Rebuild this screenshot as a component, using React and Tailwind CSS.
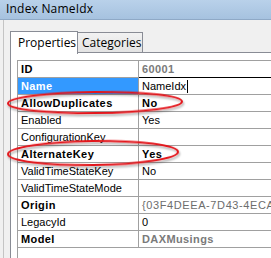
import React from 'react'

// Property rows shown in the grid
const rows = [
    { name: 'ID', value: '60001', nameClass: 'font-bold tracking-[0.4px] text-[#7a7a7a]', valueClass: 'font-bold tracking-[0.4px] text-[#7a7a7a]' },
    { name: 'Name', value: 'NameIdx', selected: true },
    { name: 'AllowDuplicates', value: 'No', nameClass: 'font-bold tracking-[0.45px]', valueClass: 'font-bold tracking-[0.45px]' },
    { name: 'Enabled', value: 'Yes' },
    { name: 'ConfigurationKey', value: '' },
    { name: 'AlternateKey', value: 'Yes', nameClass: 'font-bold tracking-[0.45px]', valueClass: 'font-bold tracking-[0.45px]' },
    { name: 'ValidTimeStateKey', value: 'No' },
    { name: 'ValidTimeStateMode', value: '', nameClass: 'text-[#7a7a7a]' },
    { name: 'Origin', value: '{03F4DEEA-7D43-4ECA-9B71}', nameClass: 'font-bold tracking-[0.4px] text-[#7a7a7a]', valueClass: 'tracking-[0.6px] text-[#6d6d6d]' },
    { name: 'LegacyId', value: '0' },
    { name: 'Model', value: 'DAXMusings', nameClass: 'font-bold tracking-[0.4px] text-[#7a7a7a]', valueClass: 'font-bold tracking-[0.4px] text-[#7a7a7a]' },
];

const PropertyRow = ({ row, index }) => (
    <div className="flex h-[17px]">
        <div
            className={`w-[121px] shrink-0 pl-[3px] border-r border-b border-[#a0a0a0] leading-[16px] whitespace-nowrap overflow-hidden ${
                row.selected ? 'bg-[#3399ff] text-white font-bold tracking-[0.4px]' : 'text-black'
            } ${row.nameClass || ''}`}
        >
            {row.name}
        </div>
        <div
            className={`flex-1 min-w-0 pl-[3px] border-b leading-[16px] whitespace-nowrap overflow-hidden flex items-center ${
                index === 0 ? 'border-black' : 'border-[#a0a0a0]'
            } ${row.valueClass || 'text-black'}`}
        >
            <span>{row.value}</span>
            {row.selected && <span className="ml-[1px] w-px h-[13px] bg-black" />}
        </div>
    </div>
);

export default function App() {
    return (
        <div className="relative w-[271px] h-[258px] overflow-hidden bg-[#f0f0f0] flex flex-col">
            {/* Title bar */}
            <div
                className="h-[20px] shrink-0 bg-gradient-to-b from-[#b9d1ea] to-[#a6c2df] border-b border-[#8fa9c6] pl-[6px] text-[12px] leading-[18px] tracking-[0.2px] text-black"
                style={{ fontFamily: '"Open Sans", sans-serif' }}
            >
                Index NameIdx
            </div>

            {/* Window body */}
            <div className="flex-1 flex flex-col pl-[3px]">
                <div className="flex-1 flex flex-col border-l border-[#c4c4c4] pl-[6px]">
                    {/* Tabs */}
                    <div
                        className="h-[33px] shrink-0 flex items-end text-[12px] text-black"
                        style={{ fontFamily: '"Open Sans", sans-serif' }}
                    >
                        <div className="h-[23px] w-[68px] bg-white border-t border-l border-r border-[#898c95] pl-[7px] leading-[22px] relative z-10 -mb-px">
                            Properties
                        </div>
                        <div className="h-[21px] w-[65px] bg-gradient-to-b from-[#f2f2f2] to-[#e3e3e3] border-t border-r border-b border-[#898c95] pl-[4px] leading-[20px]">
                            Categories
                        </div>
                        <div className="flex-1 border-b border-[#898c95]" />
                    </div>

                    {/* Tab panel */}
                    <div className="flex-1 flex flex-col bg-white border-l border-[#898c95] pl-[6px] pt-[7px]">
                        <div
                            className="flex-1 border-l border-t border-[#a0a0a0] text-[11px]"
                            style={{ fontFamily: '"Liberation Sans", Arial, sans-serif' }}
                        >
                            {rows.map((row, i) => (
                                <PropertyRow key={row.name} row={row} index={i} />
                            ))}
                        </div>
                    </div>
                </div>
            </div>

            {/* Red annotation ellipses */}
            <svg className="absolute inset-0 pointer-events-none" width="271" height="258">
                <defs>
                    <filter id="shadow" x="-10%" y="-50%" width="120%" height="200%">
                        <feDropShadow dx="1" dy="2" stdDeviation="1.2" floodColor="#000" floodOpacity="0.35" />
                    </filter>
                </defs>
                <ellipse cx="95" cy="102.5" rx="87" ry="10.5" fill="none" stroke="#e3161b" strokeWidth="2" filter="url(#shadow)" transform="rotate(-0.6 95 102.5)" />
                <ellipse cx="93" cy="153" rx="85" ry="12" fill="none" stroke="#e3161b" strokeWidth="2" filter="url(#shadow)" transform="rotate(-0.8 93 153)" />
            </svg>
        </div>
    );
}
